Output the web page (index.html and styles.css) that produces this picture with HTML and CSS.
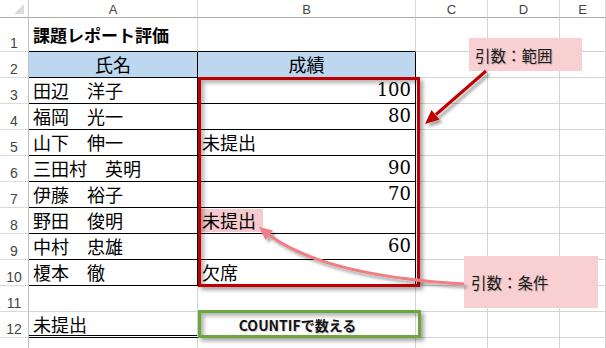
FILE: index.html
```html
<!DOCTYPE html>
<html lang="ja">
<head>
<meta charset="utf-8">
<title>課題レポート評価</title>
<link rel="stylesheet" href="styles.css">
</head>
<body>
<div class="page">
  <div class="sheet">
    <div class="corner"><span class="tri"></span></div>
    <div class="ch">A</div><div class="ch">B</div><div class="ch">C</div><div class="ch">D</div><div class="ch">E</div>

    <div class="rh">1</div><div class="c title bb">課題レポート評価</div><div class="c bb"></div><div class="c"></div><div class="c"></div><div class="c"></div>
    <div class="rh">2</div><div class="c t hd">氏名</div><div class="c t hd">成績</div><div class="c"></div><div class="c"></div><div class="c"></div>
    <div class="rh">3</div><div class="c t">田辺　洋子</div><div class="c t num">100</div><div class="c"></div><div class="c"></div><div class="c"></div>
    <div class="rh">4</div><div class="c t">福岡　光一</div><div class="c t num">80</div><div class="c"></div><div class="c"></div><div class="c"></div>
    <div class="rh">5</div><div class="c t">山下　伸一</div><div class="c t">未提出</div><div class="c"></div><div class="c"></div><div class="c"></div>
    <div class="rh">6</div><div class="c t">三田村　英明</div><div class="c t num">90</div><div class="c"></div><div class="c"></div><div class="c"></div>
    <div class="rh">7</div><div class="c t">伊藤　裕子</div><div class="c t num">70</div><div class="c"></div><div class="c"></div><div class="c"></div>
    <div class="rh">8</div><div class="c t">野田　俊明</div><div class="c t hlcell"><span class="hl">未提出</span></div><div class="c"></div><div class="c"></div><div class="c"></div>
    <div class="rh">9</div><div class="c t">中村　忠雄</div><div class="c t num">60</div><div class="c"></div><div class="c"></div><div class="c"></div>
    <div class="rh">10</div><div class="c t">榎本　徹</div><div class="c t">欠席</div><div class="c"></div><div class="c"></div><div class="c"></div>
    <div class="rh">11</div><div class="c"></div><div class="c"></div><div class="c"></div><div class="c"></div><div class="c"></div>
    <div class="rh">12</div><div class="c dbl">未提出</div><div class="c"></div><div class="c"></div><div class="c"></div><div class="c"></div>
    <div class="rh">13</div><div class="c"></div><div class="c"></div><div class="c"></div><div class="c"></div><div class="c"></div>
  </div>

  <div class="frame range"></div>
  <div class="frame count">COUNTIFで数える</div>
  <div class="note n1">引数：範囲</div>
  <div class="note n2">引数：条件</div>

  <svg class="arrows" width="606" height="348" viewBox="0 0 606 348">
    <defs>
      <filter id="sh" x="-20%" y="-20%" width="140%" height="140%">
        <feDropShadow dx="3" dy="3" stdDeviation="1.6" flood-color="#000" flood-opacity="0.35"/>
      </filter>
    </defs>
    <g filter="url(#sh)">
      <line x1="486" y1="71" x2="436" y2="114.5" stroke="#c00000" stroke-width="3"/>
      <polygon points="425,124 439.5,119.5 431.5,110" fill="#c00000"/>
    </g>
    <g filter="url(#sh)">
      <path d="M464 284 Q 325 276 269 235" fill="none" stroke="#ef7f84" stroke-width="3"/>
      <polygon points="259,227 273,230.5 265.5,240" fill="#ef7f84"/>
    </g>
  </svg>
</div>
</body>
</html>
```

FILE: styles.css
```css
html, body {
  margin: 0;
  padding: 0;
  background: #fff;
}
body {
  overflow: hidden;
  width: 606px;
  height: 348px;
}
.page {
  position: relative;
  width: 606px;
  height: 348px;
  overflow: hidden;
}
.sheet {
  display: grid;
  grid-template-columns: 29px 169px 218px 72px 72px 46px;
  grid-template-rows: 18px 34px repeat(12, 26px);
  font-family: "Noto Sans CJK JP", sans-serif;
  font-size: 18px;
  color: #000;
}
.sheet > div {
  box-sizing: border-box;
}
.corner {
  position: relative;
  border-right: 1px solid #c8c8c8;
  border-bottom: 1px solid #ababab;
}
.tri {
  position: absolute;
  right: 4px;
  bottom: 3px;
  width: 10px;
  height: 10px;
  background: #dcdcdc;
  clip-path: polygon(100% 0, 100% 100%, 0 100%);
}
.ch {
  border-right: 1px solid #dadada;
  border-bottom: 1px solid #ababab;
  font-family: "Liberation Sans", sans-serif;
  font-size: 13px;
  color: #444;
  display: flex;
  align-items: center;
  justify-content: center;
  padding-top: 1px;
}
.rh {
  border-right: 1px solid #c0c0c0;
  border-bottom: 1px solid #dadada;
  font-family: "Liberation Sans", sans-serif;
  font-size: 14px;
  color: #444;
  display: flex;
  align-items: flex-end;
  justify-content: center;
  padding-bottom: 0;
}
.c {
  border-right: 1px solid #d4d4d4;
  border-bottom: 1px solid #d4d4d4;
  display: flex;
  align-items: flex-end;
  padding: 0 4px 2px 4px;
  line-height: 21px;
  white-space: nowrap;
}
.title {
  font-weight: bold;
  font-size: 17px;
  padding-bottom: 6px;
}
.bb {
  border-bottom-color: #000;
}
.t {
  border-right-color: #000;
  border-bottom-color: #000;
}
.hd {
  background: #bdd7ee;
  justify-content: center;
}
.num {
  justify-content: flex-end;
  font-family: "DejaVu Serif", serif;
  font-size: 18px;
  padding-bottom: 3px;
}
.hlcell {
  padding: 1px 0 1px 1px;
  align-items: stretch;
}
.hl {
  display: flex;
  align-items: flex-end;
  background: #f7cbce;
  padding: 0 7px 1px 3px;
}
.dbl {
  border-bottom: 3px double #000;
  padding-bottom: 0;
}
.frame {
  position: absolute;
  box-sizing: border-box;
  box-shadow: 3px 3px 4px rgba(0, 0, 0, 0.35), inset 3px 3px 4px rgba(0, 0, 0, 0.3);
}
.range {
  left: 198px;
  top: 77px;
  width: 222px;
  height: 210px;
  border: 3px solid #c00000;
}
.count {
  left: 198px;
  top: 310px;
  width: 223px;
  height: 28px;
  border: 3px solid #6aa83e;
  display: flex;
  align-items: center;
  justify-content: center;
  padding-right: 24px;
  padding-top: 2px;
  font-family: "Noto Sans CJK JP", sans-serif;
  font-weight: bold;
  font-size: 14px;
  color: #111;
  text-shadow: 1px 1px 1px rgba(0, 0, 0, 0.2);
}
.note {
  position: absolute;
  box-sizing: border-box;
  background: #f8d0d2;
  font-family: "Noto Sans CJK JP", sans-serif;
  font-size: 15.5px;
  color: #1a1a1a;
  display: flex;
  align-items: center;
  text-shadow: 1px 1px 1px rgba(0, 0, 0, 0.2);
}
.n1 {
  left: 469px;
  top: 38px;
  width: 113px;
  height: 33px;
  padding-left: 6px;
}
.n2 {
  left: 464px;
  top: 256px;
  width: 134px;
  height: 52px;
  padding-left: 7px;
}
.arrows {
  position: absolute;
  left: 0;
  top: 0;
  pointer-events: none;
}
```
